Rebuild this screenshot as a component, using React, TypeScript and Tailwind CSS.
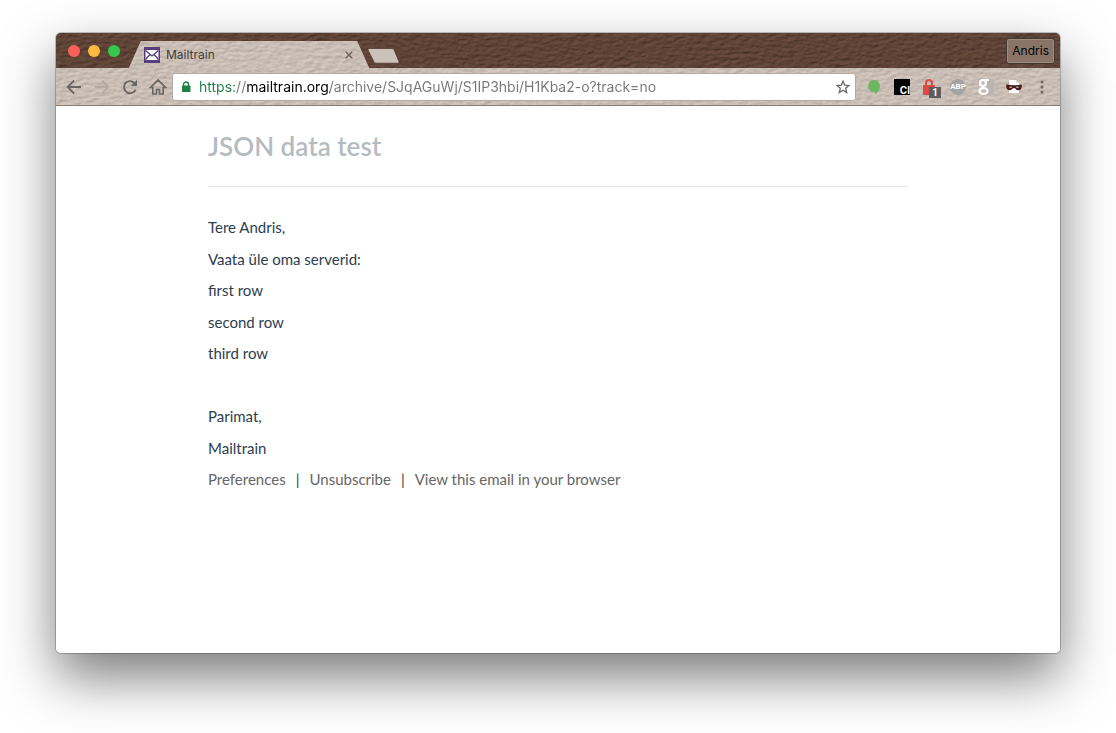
import type { ReactNode } from 'react';

function Leather({ id, light }: { id: string; light?: boolean }) {
  return (
    <svg className="pointer-events-none absolute inset-0 h-full w-full" aria-hidden="true">
      <filter id={id} x="0" y="0" width="100%" height="100%" colorInterpolationFilters="sRGB">
        <feTurbulence type="fractalNoise" baseFrequency="0.14 0.3" numOctaves="3" seed="8" result="noise" />
        <feDiffuseLighting in="noise" surfaceScale={light ? 0.4 : 0.9} diffuseConstant="1.15" lightingColor={light ? '#cec2b9' : '#614638'}>
          <feDistantLight azimuth="235" elevation="58" />
        </feDiffuseLighting>
      </filter>
      <rect width="100%" height="100%" filter={`url(#${id})`} />
    </svg>
  );
}

function IconButton({ label, children }: { label: string; children: ReactNode }) {
  return (
    <button type="button" aria-label={label} className="flex h-5 w-5 shrink-0 items-center justify-center">
      {children}
    </button>
  );
}

function TabStrip() {
  return (
    <div className="relative h-[35px] overflow-hidden bg-[#5b3e31]">
      <Leather id="strip-leather" />
      <div className="relative flex h-full items-start pr-[5px] pl-3">
        <div className="flex gap-2 pt-3">
          <button type="button" aria-label="Close window" className="h-3 w-3 rounded-full bg-[#fc605c]" />
          <button type="button" aria-label="Minimise window" className="h-3 w-3 rounded-full bg-[#fdbc40]" />
          <button type="button" aria-label="Zoom window" className="h-3 w-3 rounded-full bg-[#35c84b]" />
        </div>
        <div className="relative mt-2 ml-[9px] h-[27px] w-60 bg-[#cbbfb6] [clip-path:polygon(12px_0,228px_0,240px_100%,0_100%)]">
          <Leather id="tab-leather" light />
          <div className="relative flex h-full items-center pr-[14px] pl-[15px]">
            <svg width="16" height="16" viewBox="0 0 16 16" aria-hidden="true">
              <rect width="16" height="16" fill="#563d7c" />
              <rect x="1.5" y="3" width="13" height="10" fill="#fff" />
              <path d="M1.5 3.5 8 9l6.500-5.500M1.500 12.500 6 7.500M14.500 12.500 10 7.500" fill="none" stroke="#563d7c" strokeWidth="1.300" />
            </svg>
            <span className="ml-1.5 flex-1 font-[Inter,sans-serif] text-[12px] text-[#413c39]">Mailtrain</span>
            <button type="button" aria-label="Close tab" className="flex h-3 w-3 items-center justify-center">
              <svg width="8" height="8" viewBox="0 0 8 8" aria-hidden="true">
                <path d="m.7.700 6.600 6.600M7.300.7.700 7.300" stroke="#6c6560" strokeWidth="1.500" />
              </svg>
            </button>
          </div>
        </div>
        <button type="button" aria-label="New tab" className="mt-[15px] -ml-0.5">
          <svg width="33" height="16" viewBox="0 0 33 16" aria-hidden="true">
            <path d="M2 .5h23q1.500 0 2 1.200l5 12q.5 1.500-1 1.500H9q-1.500 0-2-1.200L1 2Q.5.500 2 .500Z" fill="#cdc2ba" stroke="#4a352a" strokeWidth=".7" />
          </svg>
        </button>
        <button type="button" className="mt-[5px] ml-auto h-[26px] rounded-[3px] border border-[#45362e] bg-[#8a7468] px-[5px] font-[Inter,sans-serif] text-[12px] text-black shadow-[inset_0_0_0_1px_#a08d82]">
          Andris
        </button>
      </div>
    </div>
  );
}

function Extensions() {
  return (
    <div className="flex shrink-0 items-center gap-2">
      <IconButton label="Chat">
        <svg width="16" height="18" viewBox="0 0 16 18" aria-hidden="true">
          <path d="M8 2a6 6 0 0 1 6 6c0 4-2.500 6.500-4.800 8.700V13.900A6 6 0 1 1 8 2Z" fill="#6db65f" />
        </svg>
      </IconButton>
      <IconButton label="CI">
        <span className="flex h-4 w-4 items-end justify-end bg-black font-[Inter,sans-serif] text-[10px] leading-[10px] font-bold text-white">CI</span>
      </IconButton>
      <IconButton label="Password lock">
        <span className="relative block h-4 w-4">
          <svg width="16" height="17" viewBox="0 0 16 17" aria-hidden="true">
            <path d="M4 7V4a3 3 0 0 1 6 0V7" fill="none" stroke="#dc4a48" strokeWidth="2" />
            <rect x="1" y="6" width="12" height="10" rx="1" fill="#dc4a48" />
          </svg>
          <span className="absolute top-2 left-[7px] flex h-[11px] w-3 items-center justify-center bg-[#5d5d5d] font-[Roboto,sans-serif] text-[10px] font-bold text-white">1</span>
        </span>
      </IconButton>
      <IconButton label="Ad blocker">
        <span className="flex h-4 w-4 shrink-0 items-center justify-center rounded-full bg-[#a5a4a4] font-[Roboto,sans-serif] text-[8px] leading-4 font-bold text-white">ABP</span>
      </IconButton>
      <IconButton label="Search">
        <svg width="16" height="16" viewBox="0 0 16 16" aria-hidden="true">
          <path d="M9 0h7v16H9Z" fill="#b9b5b2" />
          <circle cx="5" cy="4" r="3" fill="none" stroke="#fff" strokeWidth="2.200" />
          <path d="M5 1h6M5.500 7q-1.800 1.300 0 2.300" fill="none" stroke="#fff" strokeWidth="2" />
          <ellipse cx="5.500" cy="12" rx="4" ry="2.900" fill="none" stroke="#fff" strokeWidth="2.200" />
        </svg>
      </IconButton>
      <IconButton label="Masked browsing">
        <svg width="16" height="16" viewBox="0 0 16 16" aria-hidden="true">
          <path d="M3 1h7l3 3v10H3Z" fill="#fff" />
          <path d="M10 1v3h3Z" fill="#d9d6d3" />
          <path d="M1 5.500q7 1.500 14 0 1 0 .8 2-.4 3.500-3 3.700-2.300.2-3.800-2H7q-1.500 2.200-3.800 2Q.600 11 .200 7.500 0 5.500 1 5.500Z" fill="#4a1c1c" />
          <ellipse cx="4.600" cy="8.300" rx="1.600" ry=".8" fill="#b9a8a4" />
          <ellipse cx="11.400" cy="8.300" rx="1.600" ry=".8" fill="#b9a8a4" />
        </svg>
      </IconButton>
      <IconButton label="Menu">
        <svg width="4" height="14" viewBox="0 0 4 14" fill="#6b6663" aria-hidden="true">
          <circle cx="2" cy="2" r="1.500" />
          <circle cx="2" cy="7" r="1.500" />
          <circle cx="2" cy="12" r="1.500" />
        </svg>
      </IconButton>
    </div>
  );
}

function Toolbar() {
  return (
    <div className="relative border-b border-[#8a807a] bg-[#cbbfb6]">
      <Leather id="toolbar-leather" light />
      <div className="relative flex h-[37px] items-center gap-2 px-2">
        <IconButton label="Back">
          <svg width="16" height="16" viewBox="0 0 16 16" fill="none" stroke="#6b6663" strokeWidth="1.800" aria-hidden="true">
            <path d="M15 8H2.500M8 1.500 1.700 8 8 14.500" />
          </svg>
        </IconButton>
        <IconButton label="Forward">
          <svg width="16" height="16" viewBox="0 0 16 16" fill="none" stroke="#b4aaa3" strokeWidth="1.800" aria-hidden="true">
            <path d="M1 8h12.500M8 1.500 14.300 8 8 14.500" />
          </svg>
        </IconButton>
        <IconButton label="Reload">
          <svg width="16" height="16" viewBox="0 0 16 16" aria-hidden="true">
            <path d="M13.700 10.500A6.100 6.100 0 1 1 12.500 4" fill="none" stroke="#6b6663" strokeWidth="1.900" />
            <path d="M15 .8V7H8.800Z" fill="#6b6663" />
          </svg>
        </IconButton>
        <IconButton label="Home">
          <svg width="18" height="18" viewBox="0 0 18 18" aria-hidden="true">
            <path d="M1.500 9.500 9 2l7.500 7.500h-2.300V16h-3.700v-4.500h-3V16H3.800V9.500Z" fill="none" stroke="#6b6663" strokeWidth="1.600" />
          </svg>
        </IconButton>
        <div className="-ml-1 flex h-7 min-w-0 flex-1 items-center rounded-[3px] border border-[#b5aaa3] bg-white pr-1 pl-2">
          <svg width="10" height="12" viewBox="0 0 10 12" className="shrink-0" aria-hidden="true">
            <path d="M2.500 6V3.500a2.500 2.500 0 0 1 5 0V6" fill="none" stroke="#1f8048" strokeWidth="1.500" />
            <rect x="1" y="4.500" width="8.500" height="6.500" rx=".8" fill="#1f8048" />
          </svg>
          <input
            aria-label="Address"
            defaultValue="https://mailtrain.org/archive/SJqAGuWj/S1IP3hbi/H1Kba2-o?track=no"
            className="ml-2 h-full min-w-0 flex-1 bg-[linear-gradient(90deg,#1f8048_36px,#777_36px,#777_48px,#000_48px,#000_131px,#777_131px)] bg-clip-text font-[Inter,sans-serif] text-[14px] text-transparent caret-black outline-none"
          />
          <button type="button" aria-label="Bookmark this page" className="flex h-4 w-4 shrink-0 items-center justify-center">
            <svg width="14" height="14" viewBox="0 0 14 14" aria-hidden="true">
              <path d="m7 1.200 1.700 4 4.300.3-3.300 2.800 1 4.300L7 10.300l-3.700 2.300 1-4.300L1 5.500l4.300-.3Z" fill="none" stroke="#666" strokeWidth="1.300" />
            </svg>
          </button>
        </div>
        <Extensions />
      </div>
    </div>
  );
}

const messageBlocks = [
  ['Tere Andris,', 'Vaata üle oma serverid:'],
  ['first row', 'second row'],
  ['third row', '\u00a0'],
  ['Parimat,', 'Mailtrain'],
];

function Message() {
  return (
    <main className="mx-auto w-full max-w-[700px] flex-1 pt-[25px] pb-10 font-[Lato,sans-serif] text-[15px] leading-[21px] text-[#2c3e50]">
      <h1 className="border-b border-[#e4e6e6] pb-6 text-[26px] leading-[31px] font-semibold text-[#b4bcc2]">JSON data test</h1>
      <div className="mt-[30px] flex flex-col gap-2.5">
        {messageBlocks.map((lines) => (
          <div key={lines[0]} className="flex flex-col gap-[11px]">
            {lines.map((line) => (
              <p key={line}>{line}</p>
            ))}
          </div>
        ))}
        <nav className="flex flex-wrap gap-x-2.5">
          <a href="#preferences" className="text-[#666]">Preferences</a>
          <span>|</span>
          <a href="#unsubscribe" className="text-[#666]">Unsubscribe</a>
          <span>|</span>
          <a href="#browser" className="text-[#666]">View this email in your browser</a>
        </nav>
      </div>
    </main>
  );
}

export default function App() {
  return (
    <div className="flex min-h-screen flex-col overflow-hidden bg-white px-14 pt-[33px] pb-20">
      <div className="flex flex-1 flex-col rounded-[5px] shadow-[0_0_0_1px_rgba(0,0,0,0.22),0_24px_54px_rgba(0,0,0,0.52)]">
        <div className="flex flex-1 flex-col overflow-hidden rounded-[5px] bg-white">
          <TabStrip />
          <Toolbar />
          <Message />
        </div>
      </div>
    </div>
  );
}
